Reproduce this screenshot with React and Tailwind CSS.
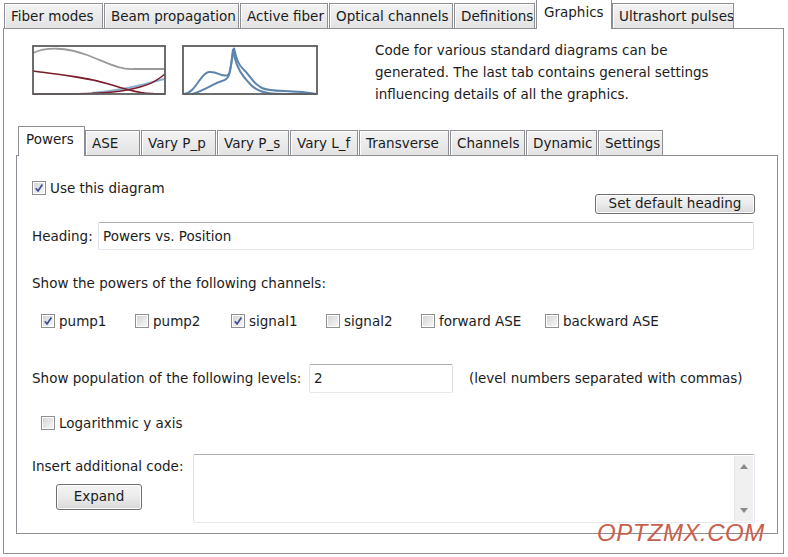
import { useState } from 'react';

const outerTabs = [
    { label: 'Fiber modes', w: 'w-[100px]' },
    { label: 'Beam propagation', w: 'w-[136px]' },
    { label: 'Active fiber', w: 'w-[89px]' },
    { label: 'Optical channels', w: 'w-[125px]' },
    { label: 'Definitions', w: 'w-[82px]' },
    { label: 'Graphics', w: 'w-[76px]' },
    { label: 'Ultrashort pulses', w: 'w-[123px]' },
];

const innerTabs = [
    { label: 'Powers', w: 'w-[67px]', active: true },
    { label: 'ASE', w: 'w-[56px]' },
    { label: 'Vary P_p', w: 'w-[76px]' },
    { label: 'Vary P_s', w: 'w-[73px]' },
    { label: 'Vary L_f', w: 'w-[69px]' },
    { label: 'Transverse', w: 'w-[91px]' },
    { label: 'Channels', w: 'w-[76px]' },
    { label: 'Dynamic', w: 'w-[72px]' },
    { label: 'Settings', w: 'w-[66px]' },
];

const Tab = ({ label, w, active }) => (
    active ? (
        <div className={`${w} h-[30px] -mb-px relative z-10 bg-white border border-b-0 border-[#8c8e94] pl-[7px] pt-[2px] leading-[20px] whitespace-nowrap`}>
            {label}
        </div>
    ) : (
        <div className={`${w} h-[25px] pr-px`}>
            <div className="h-full border border-b-0 border-[#8c8e94] bg-gradient-to-b from-[#f3f3f3] to-[#e3e3e3] shadow-[inset_1px_1px_0_#ffffff] pl-[6px] pt-[2px] leading-[20px] whitespace-nowrap overflow-hidden">
                {label}
            </div>
        </div>
    )
);

const Checkbox = ({ checked }) => (
    <span className="w-[14px] h-[14px] shrink-0 border border-[#8f8f8f] bg-white p-px inline-flex">
        <span className="w-full h-full bg-gradient-to-br from-[#d6d6d6] to-[#f6f6f6] flex items-center justify-center">
            {checked && (
                <svg width="10" height="10" viewBox="0 0 10 10">
                    <path d="M1.8 5.2 L4 8 L8.4 1.6" fill="none" stroke="#3d4f92" strokeWidth="1.7" strokeLinejoin="round" />
                </svg>
            )}
        </span>
    </span>
);

const CheckItem = ({ checked, label, className = '' }) => (
    <label className={`flex items-center gap-[4px] h-[20px] ${className}`}>
        <Checkbox checked={checked} />
        <span>{label}</span>
    </label>
);

const WinButton = ({ children, className = '' }) => (
    <button className={`border border-[#707070] rounded-[3px] bg-gradient-to-b from-[#f4f4f4] via-[#ebebeb] to-[#d9d9d9] shadow-[inset_0_0_0_1px_#fcfcfc] flex items-center justify-center leading-none ${className}`}>
        {children}
    </button>
);

const TextBox = ({ value, className = '' }) => (
    <div className={`border border-[#e3e9ef] border-t-[#abadb3] border-l-[#e2e3ea] border-r-[#dbdfe6] rounded-[2px] bg-white flex items-center pl-[4px] ${className}`}>
        {value}
    </div>
);

const PowerDiagram = () => (
    <svg width="134" height="50" viewBox="0 0 134 50" className="shrink-0">
        <defs>
            <filter id="soft1" x="-5%" y="-20%" width="110%" height="140%">
                <feGaussianBlur stdDeviation="0.6" />
            </filter>
        </defs>
        <g filter="url(#soft1)" fill="none">
            <path d="M1 8 C 14 2, 34 2, 55 10 S 88 25, 102 24 L 133 24" stroke="#9a9a9a" strokeWidth="1.8" />
            <path d="M60 48 C 85 46, 105 42, 132 34" stroke="#8fb0d0" strokeWidth="2" />
            <path d="M1 26 C 30 30, 55 32, 80 40 S 115 49, 133 49" stroke="#7a1c2c" strokeWidth="1.5" />
            <path d="M1 49 C 40 49, 75 49, 95 45 S 122 38, 133 29" stroke="#7a1c2c" strokeWidth="1.5" />
            <rect x="1" y="1" width="132" height="48" stroke="#5c5c5c" strokeWidth="1.8" />
        </g>
    </svg>
);

const PeakDiagram = () => (
    <svg width="136" height="50" viewBox="0 0 136 50" className="shrink-0">
        <defs>
            <filter id="soft2" x="-5%" y="-20%" width="110%" height="140%">
                <feGaussianBlur stdDeviation="0.7" />
            </filter>
        </defs>
        <g filter="url(#soft2)" fill="none" stroke="#5d84ad" strokeWidth="2">
            <path d="M2 49 C 14 48, 18 28, 27 27 S 40 33, 46 30 C 49 28, 50 10, 52 3 C 54 12, 56 20, 62 25 S 70 38, 80 43 S 110 44, 134 49" />
            <path d="M10 49 C 22 46, 32 38, 40 36 S 48 30, 51 4 C 53 18, 57 26, 62 32 S 72 46, 86 48 S 118 48, 134 49" />
        </g>
        <rect x="1" y="1" width="134" height="48" fill="none" stroke="#5c5c5c" strokeWidth="1.8" filter="url(#soft2)" />
    </svg>
);

export default function App() {
    const [tab] = useState('Graphics');

    return (
        <div className="w-[788px] h-[557px] bg-white relative overflow-hidden font-['DejaVu_Sans',sans-serif] text-[13.5px] text-[#1c1c1c]">
            {/* top tab strip */}
            <div className="h-[28px] pl-[4px] flex items-end">
                {outerTabs.map(t => (
                    <Tab key={t.label} {...t} active={t.label === tab} />
                ))}
            </div>

            {/* outer panel */}
            <div className="ml-[3px] w-[781px] h-[526px] border border-[#8c8e94] bg-white">
                <div className="flex items-start pt-[10px]">
                    <div className="ml-[28px] mt-[6px] flex gap-[16px]">
                        <PowerDiagram />
                        <PeakDiagram />
                    </div>
                    <p className="ml-[57px] leading-[22px] whitespace-nowrap">
                        Code for various standard diagrams can be<br />
                        generated. The last tab contains general settings<br />
                        influencing details of all the graphics.
                    </p>
                </div>

                {/* inner tabs */}
                <div className="mt-[22px] ml-[14px] h-[28px] flex items-end">
                    {innerTabs.map(t => (
                        <Tab key={t.label} {...t} />
                    ))}
                </div>

                <div className="ml-[12px] w-[762px] h-[379px] border border-[#8c8e94] bg-white pl-[15px] pr-[22px]">
                    <div className="mt-[22px] h-[36px] flex justify-between">
                        <CheckItem checked label="Use this diagram" />
                        <WinButton className="self-end w-[160px] h-[20px]">Set default heading</WinButton>
                    </div>

                    <div className="mt-[8px] flex items-center">
                        <span className="w-[66px]">Heading:</span>
                        <TextBox value="Powers vs. Position" className="w-[656px] h-[28px]" />
                    </div>

                    <p className="mt-[23px] h-[20px] leading-[20px]">Show the powers of the following channels:</p>

                    <div className="mt-[18px] ml-[9px] flex">
                        <CheckItem checked label="pump1" className="w-[94px]" />
                        <CheckItem label="pump2" className="w-[96px]" />
                        <CheckItem checked label="signal1" className="w-[95px]" />
                        <CheckItem label="signal2" className="w-[95px]" />
                        <CheckItem label="forward ASE" className="w-[124px]" />
                        <CheckItem label="backward ASE" />
                    </div>

                    <div className="mt-[33px] flex items-center">
                        <span className="w-[277px] whitespace-nowrap">Show population of the following levels:</span>
                        <TextBox value="2" className="w-[144px] h-[29px]" />
                        <span className="ml-[16px] whitespace-nowrap">(level numbers separated with commas)</span>
                    </div>

                    <CheckItem label="Logarithmic y axis" className="mt-[20px] ml-[9px]" />

                    <div className="mt-[21px] flex">
                        <div className="w-[161px] pt-[2px]">
                            <p className="h-[20px] leading-[20px] whitespace-nowrap">Insert additional code:</p>
                            <WinButton className="mt-[8px] ml-[24px] w-[86px] h-[26px]">Expand</WinButton>
                        </div>
                        <div className="w-[563px] h-[69px] border border-[#e3e9ef] border-t-[#abadb3] border-l-[#e2e3ea] rounded-[2px] bg-white flex justify-end p-px">
                            <div className="w-[19px] h-full bg-[#f0f0f0] border-l border-[#e6e6e6] flex flex-col items-center justify-between py-[8px]">
                                <svg width="8" height="5" viewBox="0 0 8 5"><path d="M0 5 L4 0 L8 5 Z" fill="#8a8a8a" /></svg>
                                <svg width="8" height="5" viewBox="0 0 8 5"><path d="M0 0 L4 5 L8 0 Z" fill="#8a8a8a" /></svg>
                            </div>
                        </div>
                    </div>
                </div>
            </div>

            {/* watermark */}
            <span className="absolute left-[597px] top-[518px] font-['Liberation_Sans',sans-serif] italic text-[24px] leading-[30px] text-[#c8604c] tracking-[0.5px]">
                OPTZMX.COM
            </span>
        </div>
    );
}
